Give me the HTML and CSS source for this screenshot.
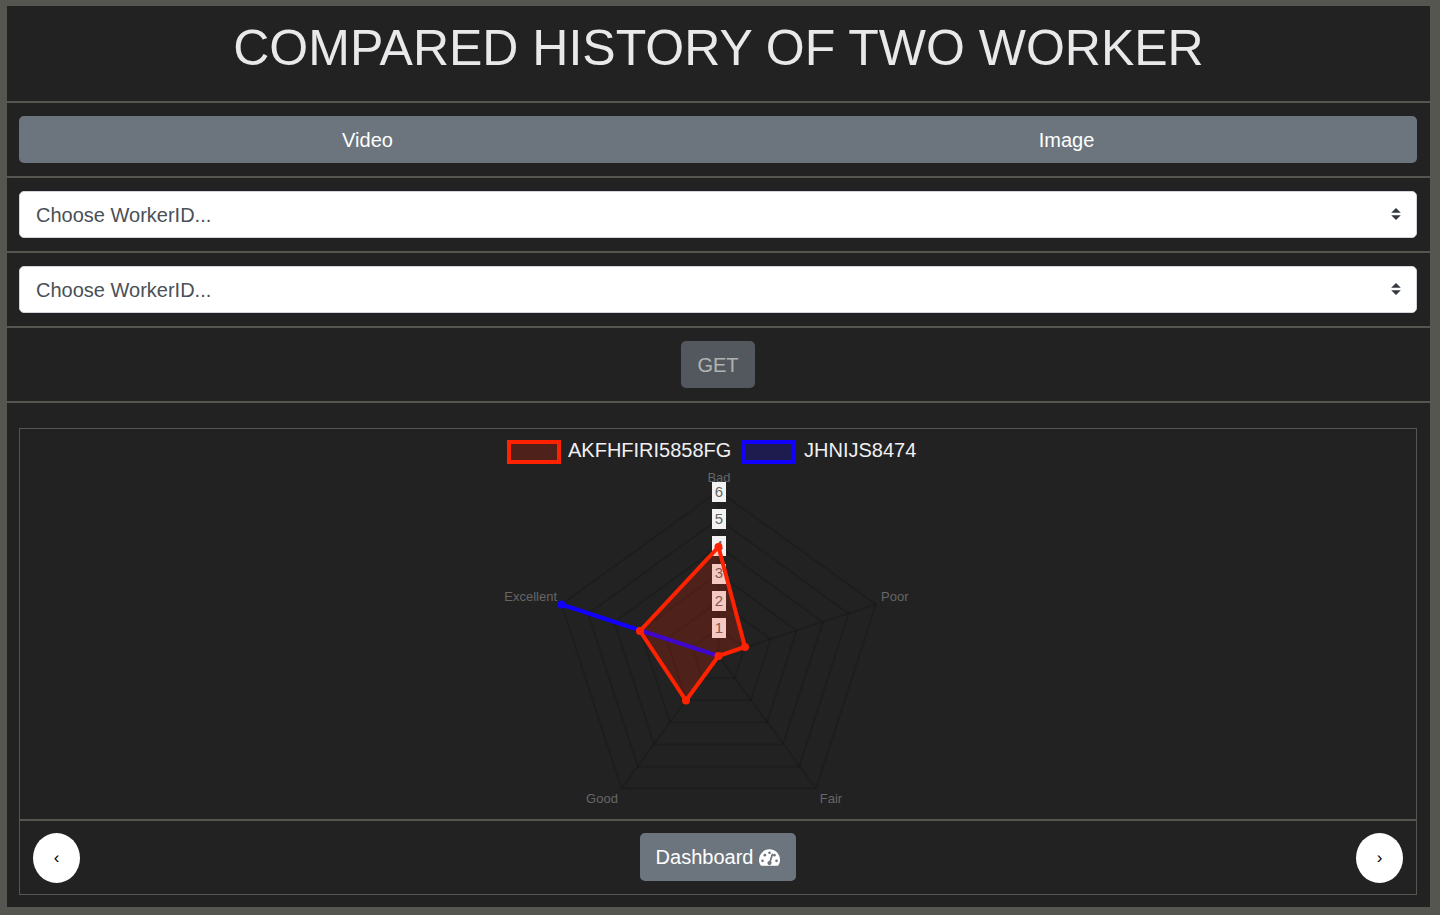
FILE: index.html
```html
<!DOCTYPE html>
<html lang="en">
<head>
<meta charset="utf-8">
<title>Compared history of two worker</title>
<link rel="stylesheet" href="styles.css">
</head>
<body>
<main class="panel">
  <header class="title-row"><h1 class="title">COMPARED HISTORY OF TWO WORKER</h1></header>
  <section class="row">
    <div class="btn-group">
      <button type="button" class="btn group-btn">Video</button>
      <button type="button" class="btn group-btn">Image</button>
    </div>
  </section>
  <section class="row">
    <div class="select-wrap">
      <select class="select" aria-label="First worker"><option>Choose WorkerID...</option></select>
      <svg class="select-arrow" viewBox="0 0 4 5" aria-hidden="true"><path d="M2 0L0 2h4zm0 5L0 3h4z"/></svg>
    </div>
  </section>
  <section class="row">
    <div class="select-wrap">
      <select class="select" aria-label="Second worker"><option>Choose WorkerID...</option></select>
      <svg class="select-arrow" viewBox="0 0 4 5" aria-hidden="true"><path d="M2 0L0 2h4zm0 5L0 3h4z"/></svg>
    </div>
  </section>
  <section class="row centered">
    <button type="button" class="btn" disabled>GET</button>
  </section>
  <section class="result">
    <div class="card">
      <div class="chart-area">
        <svg class="chart" viewBox="0 0 450 390" role="img" aria-label="Ratings of two workers">
          <g class="legend">
            <rect class="red-box" x="16" y="13" width="50" height="20"/>
            <text x="75" y="28">AKFHFIRI5858FG</text>
            <rect class="blue-box" x="251" y="13" width="50" height="20"/>
            <text x="311" y="28">JHNIJS8474</text>
          </g>
          <g class="grid">
            <path d="M225.5 199.6L251.6 218.5L241.6 249.2H209.4L199.4 218.5Z"/>
            <path d="M225.5 172.2L277.6 210.1L257.7 271.3H193.3L173.4 210.1Z"/>
            <path d="M225.5 144.8L303.7 201.6L273.8 293.5H177.2L147.3 201.6Z"/>
            <path d="M225.5 117.4L329.8 193.1L289.9 315.6H161.1L121.2 193.1Z"/>
            <path d="M225.5 90L355.8 184.7L306.1 337.8H144.9L95.2 184.7Z"/>
            <path d="M225.5 62L383 175.5L323 359.5H128.5L68.5 175.5Z"/>
            <path d="M225.5 227V62M225.5 227L383 175.5M225.5 227L323 359.5M225.5 227L128.5 359.5M225.5 227L68.5 175.5"/>
          </g>
          <g class="labels">
            <text x="226" y="53" text-anchor="middle">Bad</text>
            <text x="388" y="172">Poor</text>
            <text x="338" y="374" text-anchor="middle">Fair</text>
            <text x="109" y="374" text-anchor="middle">Good</text>
            <text x="64" y="172" text-anchor="end">Excellent</text>
          </g>
          <g class="tick-boxes">
            <rect x="219" y="53" width="14" height="20"/>
            <rect x="219" y="80" width="14" height="20"/>
            <rect x="219" y="107" width="14" height="20"/>
            <rect x="219" y="135" width="14" height="20"/>
            <rect x="219" y="162" width="14" height="20"/>
            <rect x="219" y="189" width="14" height="20"/>
          </g>
          <g class="ticks">
            <text x="226" y="68">6</text>
            <text x="226" y="95">5</text>
            <text x="226" y="122">4</text>
            <text x="226" y="149">3</text>
            <text x="226" y="177">2</text>
            <text x="226" y="204">1</text>
          </g>
          <path class="blue-line" d="M225.5 227L68.5 175.5"/>
          <circle class="blue-dot" cx="68.5" cy="175.5" r="4"/>
          <path class="red-line" d="M225.5 118L252 218L225.5 227L193 271.5L147 202Z"/>
          <g class="red-dot">
            <circle cx="225.5" cy="118" r="4"/><circle cx="252" cy="218" r="4"/><circle cx="225.5" cy="227" r="4"/><circle cx="193" cy="271.5" r="4"/><circle cx="147" cy="202" r="4"/>
          </g>
        </svg>
      </div>
      <nav class="nav">
        <button type="button" class="round" aria-label="Previous">‹</button>
        <button type="button" class="btn dash">Dashboard
          <svg class="gauge" viewBox="0 32 576 448" aria-hidden="true"><path fill-rule="evenodd" d="M288 32C129 32 0 161 0 320c0 53 14 102 39 145 6 10 16 15 27 15h444c11 0 21-5 27-15 25-43 39-92 39-145C576 161 447 32 288 32z"/><g class="gauge-detail"><circle cx="288" cy="124" r="36"/><circle cx="160" cy="192" r="36"/><circle cx="96" cy="348" r="36"/><circle cx="424" cy="192" r="36"/><circle cx="480" cy="348" r="36"/><circle cx="288" cy="408" r="58"/><path d="M344 164a24 24 0 0 1 46 15L322 388l-46-15z"/></g></svg>
        </button>
        <button type="button" class="round" aria-label="Next">›</button>
      </nav>
    </div>
  </section>
</main>
</body>
</html>
```
FILE: styles.css
```css
* { box-sizing: border-box; }
body {
  margin: 0;
  padding: 6px 10px 8px 7px;
  background: #565650;
  font-family: "Liberation Sans", Arial, sans-serif;
  font-size: 20px;
  line-height: 30px;
}
.panel { background: #222; }
.title-row { padding: 12px 12px 23px; }
.title {
  margin: 0;
  color: #e9e9eb;
  font-size: 50px;
  font-weight: 400;
  line-height: 60px;
  text-align: center;
}
.row { border-top: 2px solid #565650; padding: 13px 13px 13px 12px; }
.centered { display: flex; justify-content: center; }
.btn {
  height: 47px;
  padding: 0 16px;
  border: 0;
  border-radius: 5px;
  background: #6c757d;
  color: #fff;
  font: inherit;
}
.btn:disabled { opacity: 0.65; }
.btn-group { display: flex; border-radius: 5px; overflow: hidden; }
.group-btn { flex: 1; padding: 0 18px 0 16px; border-radius: 0; }
.select-wrap { position: relative; }
.select {
  display: block;
  width: 100%;
  height: 47px;
  padding: 0 16px;
  border: 1px solid #ced4da;
  border-radius: 5px;
  background: #fff;
  color: #495057;
  font: inherit;
  appearance: none;
}
.select-arrow {
  position: absolute;
  top: 17px;
  right: 16px;
  width: 10px;
  height: 12px;
  fill: #343a40;
  pointer-events: none;
}
.result { border-top: 2px solid #565650; padding: 25px 13px 12px 12px; }
.card { border: 1px solid #565650; }
.chart-area { display: flex; justify-content: center; }
.chart { display: block; width: 450px; height: 390px; }
.legend text { fill: #f0f0f2; font-size: 20px; }
.red-box { fill: rgba(255, 34, 0, 0.2); stroke: #f20; stroke-width: 4px; }
.blue-box { fill: rgba(17, 0, 255, 0.2); stroke: #10f; stroke-width: 4px; }
.grid path { fill: none; stroke: rgba(0, 0, 0, 0.14); stroke-width: 2px; }
.labels text { fill: #666; font-size: 13px; }
.tick-boxes rect { fill: #f3f3f3; }
.ticks text { fill: #666; font-size: 15px; text-anchor: middle; }
.blue-line { fill: none; stroke: #10f; stroke-width: 4px; }
.red-line { fill: rgba(255, 34, 0, 0.2); stroke: #f20; stroke-width: 4px; }
.blue-dot { fill: #10f; }
.red-dot { fill: #f20; }
.nav {
  display: flex;
  justify-content: space-between;
  align-items: flex-start;
  padding: 12px 13px 11px;
  border-top: 2px solid #565650;
}
.dash { display: flex; align-items: center; gap: 6px; height: 48px; }
.gauge { width: 21px; height: 17px; fill: #fff; }
.gauge-detail { fill: #6c757d; }
.round {
  width: 47px;
  height: 50px;
  padding: 0;
  border: 0;
  border-radius: 50%;
  background: #fff;
  color: #000;
  font: inherit;
  font-size: 17px;
}
```
